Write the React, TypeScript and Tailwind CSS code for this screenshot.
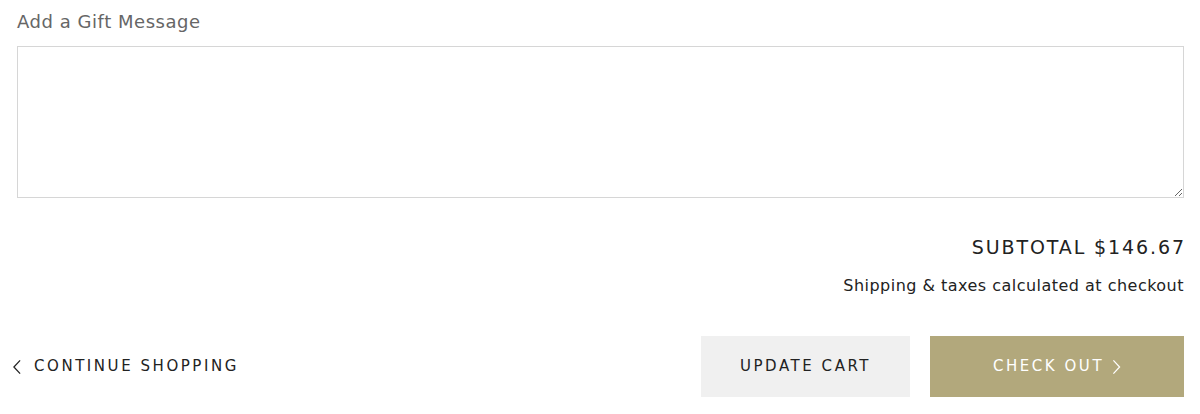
import React from 'react';

const font = { fontFamily: '"DejaVu Sans", "Noto Sans", sans-serif' };

const Chevron: React.FC<{ dir: 'left' | 'right'; className?: string }> = ({ dir, className }) => (
  <svg viewBox="0 0 10 18" className={className} fill="none" stroke="currentColor" strokeWidth="1.4">
    {dir === 'left' ? <path d="M8.5 1.5 1.5 9l7 7.5" /> : <path d="M1.5 1.5 8.5 9l-7 7.5" />}
  </svg>
);

export default function App() {
  return (
    <div className="w-[1200px] h-[414px] bg-white" style={font}>
      <div className="pl-[17px] pr-[16px] pt-[10px]">
        <label className="block text-[18px] leading-[24px] tracking-[0.03em] text-[#666]">Add a Gift Message</label>
        <textarea className="mt-[12px] block w-full h-[152px] border border-[#d6d6d6] bg-white outline-none resize-y" />

        <div className="mt-[35px] flex flex-col items-end">
          <p className="-mr-[2px] text-[19px] leading-[28px] tracking-[0.1em] text-[#222]">SUBTOTAL $146.67</p>
          <p className="mt-[14px] text-[16px] leading-[22px] tracking-[0.03em] text-[#222]">Shipping &amp; taxes calculated at checkout</p>
        </div>

        <div className="mt-[39px] flex items-center">
          <a className="-ml-[5px] flex items-center gap-[12px] text-[15px] tracking-[0.17em] text-[#222]">
            <Chevron dir="left" className="w-[10px] h-[16px]" />
            CONTINUE SHOPPING
          </a>
          <div className="ml-auto flex gap-[20px]">
            <button className="w-[209px] h-[61px] bg-[#f0f0f0] text-[15px] tracking-[0.17em] text-[#222]">UPDATE CART</button>
            <button className="w-[254px] h-[61px] bg-[#b2a87c] text-[15px] tracking-[0.17em] text-white flex items-center justify-center gap-[8px]">
              CHECK OUT
              <Chevron dir="right" className="w-[9px] h-[16px]" />
            </button>
          </div>
        </div>
      </div>
    </div>
  );
}
